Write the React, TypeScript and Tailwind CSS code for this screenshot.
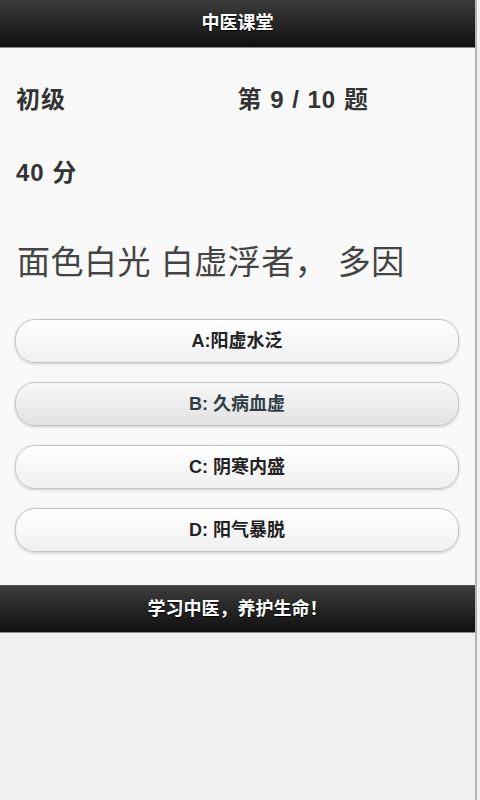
const options = [
  { key: "A", sep: ":", text: "阳虚水泛", active: false },
  { key: "B", sep: ": ", text: "久病血虚", active: true },
  { key: "C", sep: ": ", text: "阴寒内盛", active: false },
  { key: "D", sep: ": ", text: "阳气暴脱", active: false },
];

const font = {
  fontFamily: '"Liberation Sans", "Noto Sans CJK SC", sans-serif',
};

export default function App() {
  return (
    <div className="flex min-h-[800px] w-[480px] bg-[#f0f0f0]" style={font}>
      <div className="flex w-[475px] flex-col">
        <header className="flex h-[48px] items-center justify-center border-b border-[#8a8a8a] bg-gradient-to-b from-[#3c3c3c] to-[#111111] text-[18px] font-bold text-white [text-shadow:0_1px_1px_#000]">
          中医课堂
        </header>

        <main className="bg-[#f9f9f9] px-[15px] pb-[33px] pt-[37px]">
          <div className="grid grid-cols-2 text-[24px] font-bold leading-[30px] tracking-[1px] text-[#333]">
            <div className="pl-[1px]">初级</div>
            <div>第 9 / 10 题</div>
          </div>
          <div className="mt-[43px] pl-[1px] text-[24px] font-bold leading-[30px] tracking-[1px] text-[#333]">
            40 分
          </div>
          <p className="mt-[55px] pl-[2px] text-[33px] leading-[40px] tracking-[0.5px] text-[#444]">
            面色白光 白虚浮者， 多因
          </p>

          <div className="mt-[36px] flex flex-col gap-[19px] pr-[1px]">
            {options.map((o) => (
              <button
                key={o.key}
                className={`h-[44px] w-full rounded-[20px] border border-[#c4c4c4] text-[18px] font-bold shadow-[0_1px_3px_rgba(0,0,0,0.18)] ${
                  o.active
                    ? "bg-gradient-to-b from-[#f8f8f8] to-[#e2e2e2] text-[#2f3e46]"
                    : "bg-gradient-to-b from-white to-[#f0f0f0] text-[#222]"
                }`}
                style={font}
              >
                {o.key}
                {o.sep}
                {o.text}
              </button>
            ))}
          </div>
        </main>

        <footer className="flex h-[48px] items-center justify-center border-y border-t-[#555] border-b-[#8a8a8a] bg-gradient-to-b from-[#3c3c3c] to-[#111111] text-[18px] font-bold text-white [text-shadow:0_1px_1px_#000]">
          学习中医，养护生命！
        </footer>

        <div className="flex-1 bg-[#f0f0f0]" />
      </div>
      <div className="w-[5px] border-l-2 border-[#b5b5b5] bg-[#f2f2f2]" />
    </div>
  );
}
